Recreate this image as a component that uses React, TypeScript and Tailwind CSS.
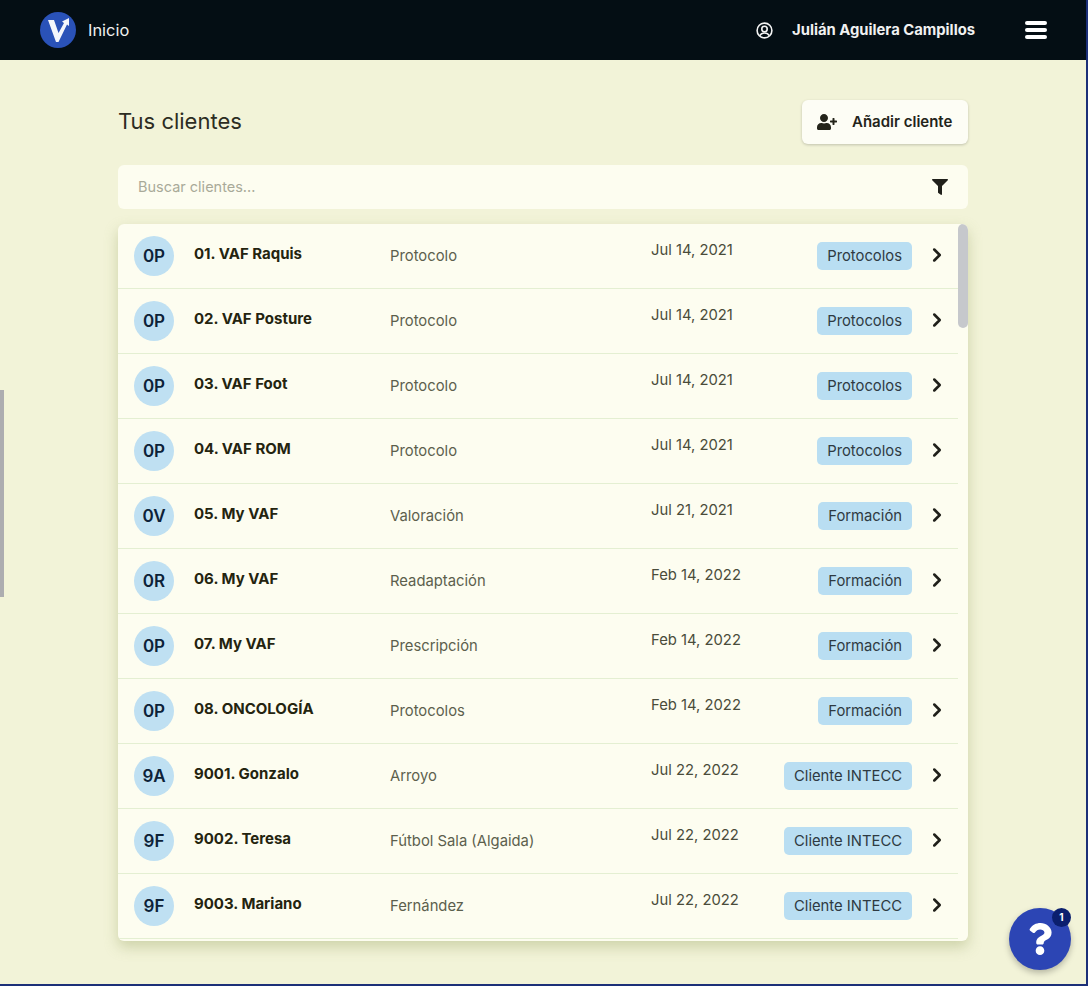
import { ChevronRight } from "lucide-react";
import { FaFilter, FaQuestion, FaUserPlus } from "react-icons/fa";

const clients = [
    { initials: "0P", name: "01. VAF Raquis", sub: "Protocolo", date: "Jul 14, 2021", tag: "Protocolos" },
    { initials: "0P", name: "02. VAF Posture", sub: "Protocolo", date: "Jul 14, 2021", tag: "Protocolos" },
    { initials: "0P", name: "03. VAF Foot", sub: "Protocolo", date: "Jul 14, 2021", tag: "Protocolos" },
    { initials: "0P", name: "04. VAF ROM", sub: "Protocolo", date: "Jul 14, 2021", tag: "Protocolos" },
    { initials: "0V", name: "05. My VAF", sub: "Valoración", date: "Jul 21, 2021", tag: "Formación" },
    { initials: "0R", name: "06. My VAF", sub: "Readaptación", date: "Feb 14, 2022", tag: "Formación" },
    { initials: "0P", name: "07. My VAF", sub: "Prescripción", date: "Feb 14, 2022", tag: "Formación" },
    { initials: "0P", name: "08. ONCOLOGÍA", sub: "Protocolos", date: "Feb 14, 2022", tag: "Formación" },
    { initials: "9A", name: "9001. Gonzalo", sub: "Arroyo", date: "Jul 22, 2022", tag: "Cliente INTECC" },
    { initials: "9F", name: "9002. Teresa", sub: "Fútbol Sala (Algaida)", date: "Jul 22, 2022", tag: "Cliente INTECC" },
    { initials: "9F", name: "9003. Mariano", sub: "Fernández", date: "Jul 22, 2022", tag: "Cliente INTECC" },
];

function Logo() {
    return (
        <svg width="36" height="36" viewBox="0 0 36 36">
            <circle cx="18" cy="18" r="18" fill="#2a52b8" />
            <polygon points="8,8 14,8 18.5,21 24,11 22,9.5 29,6 29,14 27,12.5 18.5,30 16,30" fill="#f4f6fb" />
        </svg>
    );
}

function UserCircle() {
    return (
        <svg width="17" height="17" viewBox="0 0 17 17" fill="none" stroke="#f4f4f4" strokeWidth="1.6">
            <circle cx="8.5" cy="8.5" r="7.4" />
            <circle cx="8.5" cy="7" r="2.7" />
            <path d="M3.8 13.6c1-1.9 2.6-2.6 4.7-2.6s3.7.7 4.7 2.6" />
        </svg>
    );
}

function ClientRow({ c }: { c: (typeof clients)[number] }) {
    return (
        <div className="flex h-[65px] shrink-0 items-center border-b border-[#e4efd2] pl-[16px] pr-[10px]">
            <div className="flex h-10 w-10 shrink-0 items-center justify-center rounded-full bg-[#bfe0f2] pt-[1px] text-[17px] font-semibold text-[#0d2238]">
                {c.initials}
            </div>
            <div className="ml-5 w-[196px] -translate-y-[2px] text-[15px] font-bold text-[#24240f]">{c.name}</div>
            <div className="w-[261px] text-[14.8px] text-[#5c5f4d]">{c.sub}</div>
            <div className="-translate-y-[6px] text-[14.8px] text-[#4a4c3a]">{c.date}</div>
            <div className="ml-auto h-[28px] rounded-[5px] bg-[#b9def2] px-[10px] pt-[3px] text-[14.8px] text-[#2e3a42]">{c.tag}</div>
            <ChevronRight className="ml-[14px] -translate-y-[1px] text-[#20201a]" size={22} strokeWidth={2.8} />
        </div>
    );
}

export default function App() {
    return (
        <div className="relative h-[986px] w-[1088px] overflow-hidden bg-[#f2f3d8] font-['Inter',sans-serif]">
            {/* Top bar */}
            <header className="flex h-[60px] items-center bg-[#040e14] pl-10 pr-[41px]">
                <Logo />
                <span className="ml-3 text-[16.4px] text-[#f1f1f1]">Inicio</span>
                <div className="ml-auto flex items-center">
                    <UserCircle />
                    <span className="ml-[19px] text-[14.8px] font-bold text-[#f1f1f1]">Julián Aguilera Campillos</span>
                    <div className="ml-[50px] flex flex-col gap-[3px]">
                        <span className="h-[4px] w-[22px] rounded-sm bg-white" />
                        <span className="h-[4px] w-[22px] rounded-sm bg-white" />
                        <span className="h-[4px] w-[22px] rounded-sm bg-white" />
                    </div>
                </div>
            </header>

            <main className="ml-[118px] w-[850px]">
                <div className="flex h-[105px] items-center justify-between pt-[19px]">
                    <h1 className="-translate-y-[1px] text-[22px] font-normal text-[#2c2c22]">Tus clientes</h1>
                    <button className="flex h-[44px] w-[166px] items-center rounded-md bg-[#fdfdf5] pl-[15px] text-[15px] font-semibold text-[#24241a] shadow-[0_1px_3px_rgba(0,0,0,0.2)]">
                        <FaUserPlus size={20} />
                        <span className="ml-[15px]">Añadir cliente</span>
                    </button>
                </div>

                <div className="flex h-[44px] items-center justify-between rounded-md bg-[#fdfdf0] pl-5 pr-[20px]">
                    <span className="text-[14.5px] text-[#a9aa99]">Buscar clientes...</span>
                    <FaFilter size={16} className="text-[#20201a]" />
                </div>

                <div className="relative mt-[15px] h-[717px] overflow-hidden rounded-md bg-[#fdfdf0] pr-[10px] shadow-[0_6px_14px_rgba(160,170,110,0.45)]">
                    <div className="flex h-full flex-col">
                        {clients.map((c, i) => (
                            <ClientRow key={i} c={c} />
                        ))}
                    </div>
                    <div className="absolute right-0 top-0 h-[104px] w-[10px] rounded-full bg-[#c6c8cc]" />
                </div>
            </main>

            {/* left edge handle */}
            <div className="absolute left-0 top-[390px] h-[207px] w-[4px] bg-[#adadb0]" />

            {/* help button */}
            <button className="absolute left-[1009px] top-[908px] flex h-[62px] w-[62px] items-center justify-center rounded-full bg-[#2c45b4] text-white shadow-[0_3px_6px_rgba(0,0,0,0.25)]">
                <FaQuestion size={32} />
                <span className="absolute right-0 top-0 flex h-[19px] w-[19px] items-center justify-center rounded-full bg-[#0b1f6e] text-[10px] font-bold">
                    1
                </span>
            </button>

            {/* window frame */}
            <div className="absolute bottom-0 left-0 h-[2px] w-full bg-[#1c2f78]" />
            <div className="absolute right-0 top-0 h-full w-[2px] bg-[#1c2f78]" />
        </div>
    );
}
